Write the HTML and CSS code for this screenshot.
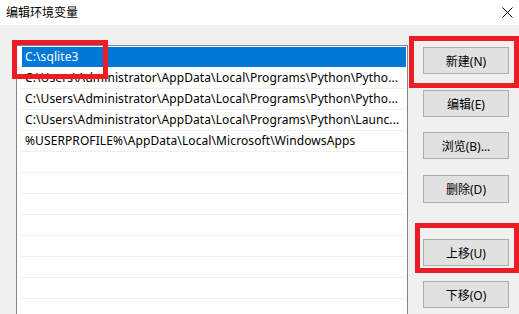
FILE: index.html
```html
<!DOCTYPE html>
<html lang="zh-CN">
<head>
<meta charset="utf-8">
<title>编辑环境变量</title>
<link rel="stylesheet" href="styles.css">
</head>
<body>
<div class="window">
  <div class="titlebar">
    <span class="title">编辑环境变量</span>
    <svg class="close" width="11" height="11" viewBox="0 0 11 11"><path d="M0.5 0.5 L10.5 10.5 M10.5 0.5 L0.5 10.5" stroke="#000" stroke-width="1" fill="none"/></svg>
  </div>
  <div class="content">
    <div class="listbox">
      <div class="row selected"><span class="sel">C:\sqlite3</span></div>
      <div class="row">C:\Users\Administrator\AppData\Local\Programs\Python\Pytho...</div>
      <div class="row">C:\Users\Administrator\AppData\Local\Programs\Python\Pytho...</div>
      <div class="row">C:\Users\Administrator\AppData\Local\Programs\Python\Launc...</div>
      <div class="row">%USERPROFILE%\AppData\Local\Microsoft\WindowsApps</div>
      <div class="row"></div>
      <div class="row"></div>
      <div class="row"></div>
      <div class="row"></div>
      <div class="row"></div>
      <div class="row"></div>
      <div class="row"></div>
      <div class="row"></div>
    </div>
    <div class="buttons">
      <button class="btn b-new">新建(N)</button>
      <button class="btn b-edit">编辑(E)</button>
      <button class="btn b-browse">浏览(B)...</button>
      <button class="btn b-del">删除(D)</button>
      <button class="btn b-up">上移(U)</button>
      <button class="btn b-down">下移(O)</button>
    </div>
  </div>
  <div class="mark mark-1"></div>
  <div class="mark mark-2"></div>
  <div class="mark mark-3"></div>
</div>
</body>
</html>
```

FILE: styles.css
```css
html, body {
  margin: 0;
  padding: 0;
}
body {
  background: #f0f0f0;
  font-family: "Noto Sans", "Noto Sans CJK SC", sans-serif;
  font-size: 12px;
  color: #000;
  overflow: hidden;
}
.window {
  position: relative;
  width: 519px;
  height: 314px;
  overflow: hidden;
}
.titlebar {
  height: 25px;
  background: #fff;
  display: flex;
  align-items: center;
  justify-content: space-between;
  padding: 0 6px 1px 6px;
  box-sizing: border-box;
}
.title {
  font-family: "Noto Sans CJK SC", sans-serif;
  font-size: 12px;
  line-height: 14px;
}
.close {
  display: block;
}
.content {
  display: flex;
  align-items: flex-start;
}
.listbox {
  margin-left: 16px;
  margin-top: 20px;
  width: 392px;
  height: 300px;
  box-sizing: border-box;
  border: 1px solid #828790;
  background: #fff;
  padding: 1px 1px 0 1px;
}
.row {
  height: 20px;
  line-height: 20px;
  border-bottom: 1px solid #f0f0f0;
  margin-left: 1px;
  padding-left: 6px;
  white-space: nowrap;
  overflow: hidden;
  letter-spacing: 0.1px;
}
.row.selected {
  padding-left: 0;
  margin-left: 4px;
  border-bottom: 1px solid #fff;
  background: #0078d7;
}
.sel {
  color: #fff;
  padding-left: 3px;
}
.buttons {
  display: flex;
  flex-direction: column;
  margin-left: 15px;
  margin-top: 22px;
}
.btn {
  width: 86px;
  height: 27px;
  box-sizing: border-box;
  background: #e1e1e1;
  border: 1px solid #adadad;
  font-family: "Noto Sans", "Noto Sans CJK SC", sans-serif;
  font-size: 12px;
  color: #000;
  padding: 0;
  margin: 0;
}
.b-edit { margin-top: 16px; }
.b-browse { margin-top: 15px; }
.b-del { margin-top: 16px; height: 28px; }
.b-up { margin-top: 36px; }
.b-down { margin-top: 15px; }
.mark {
  position: absolute;
  border: 5px solid #ed1c24;
  box-sizing: border-box;
  pointer-events: none;
}
.mark-1 { left: 12px; top: 40px; width: 96px; height: 39px; }
.mark-2 { left: 409px; top: 36px; width: 110px; height: 52px; }
.mark-3 { left: 415px; top: 223px; width: 104px; height: 50px; }
```
